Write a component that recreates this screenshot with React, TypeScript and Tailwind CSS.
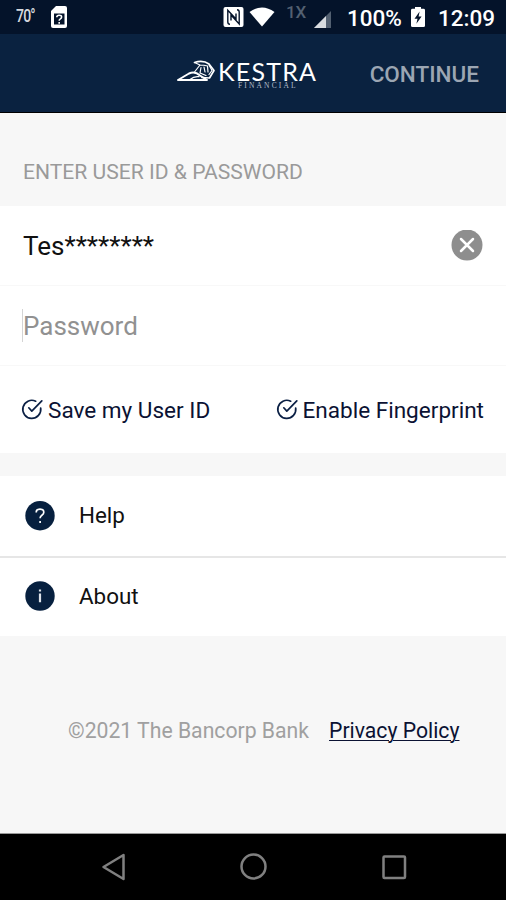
import React from 'react';

const CheckIcon = () => (
  <svg width="22" height="22" viewBox="0 0 22 22" fill="none" stroke="#0a1f44" strokeWidth="1.7" strokeLinecap="round" strokeLinejoin="round">
    <path d="M14.700 3.200A9 9 0 1 0 19.700 10" />
    <path d="M7.800 9.800l3 3.300L20.800 2.800" />
  </svg>
);

const StatusBar = () => (
  <div className="flex h-[34px] items-center bg-[#04132a] pl-4 pr-[11px] text-white">
    <span className="w-[34px] text-[17.500px] leading-none tracking-[-1px] text-[#d5d8dd]">
      <span className="inline-block origin-left scale-x-[0.8] font-medium">70°</span>
    </span>
    <svg width="18" height="24" viewBox="0 0 18 24">
      <path d="M6 1h9q2 0 2 2v18q0 2-2 2H3q-2 0-2-2V6z" fill="#fff" />
      <path d="M4 8.500h10.500v11H4z" fill="#04132a" />
      <path d="M6.800 12.200q0-2 2.400-2t2.400 1.900q0 1.100-1.200 1.800-1.200.7-1.200 1.800M9.200 17v1.700" fill="none" stroke="#fff" strokeWidth="1.6" />
    </svg>
    <svg className="ml-auto" width="21" height="22" viewBox="0 0 21 22">
      <rect x="0.5" y="1" width="20" height="20" rx="2" fill="#fff" />
      <path d="M7 18.300Q4.800 18.300 4.800 16V4.200L13 13V7.500M14 3.700Q16.200 3.700 16.200 6v12L8 9v5.500" fill="none" stroke="#04132a" strokeWidth="1.4" />
    </svg>
    <svg className="ml-[5px]" width="26" height="20" viewBox="0 0 26 20">
      <path d="M.5 5Q13-4 25.500 5L13 19.500z" fill="#fff" />
    </svg>
    <span className="mb-[10px] ml-[11px] w-[28px] text-[17px] font-medium leading-none text-[#536071]">1X</span>
    <svg className="mt-[4px]" width="17" height="17" viewBox="0 0 17 17">
      <path d="M17 0v17H0z" fill="#536071" />
      <path d="M12 5v12H0z" fill="#d9dce0" />
    </svg>
    <span className="ml-[16px] mt-[3px] w-[64px] text-[22.500px] font-medium leading-none">100%</span>
    <svg width="14" height="20" viewBox="0 0 14 22" preserveAspectRatio="none">
      <path d="M4 0h6v2h2.500Q14 2 14 3.500v17q0 1.500-1.500 1.500h-11Q0 22 0 20.500v-17Q0 2 1.500 2H4z" fill="#fff" />
      <path d="M8.600 5L3.500 12.800h3L5.400 18.500l5.200-8H7.600z" fill="#04132a" />
    </svg>
    <span className="ml-[13px] mt-[3px] text-[22.500px] font-medium leading-none">12:09</span>
  </div>
);

const Logo = () => (
  <div className="flex pl-[176px]">
    <svg width="40" height="30" viewBox="0 0 40 30" fill="none" stroke="#fff" strokeLinejoin="round" strokeLinecap="round">
      <path d="M2 23L13 16.500Q19 14 24 18.500L31 23z" strokeWidth="2" />
      <path d="M14 22.500q4-3.500 9-2.800" strokeWidth="1.200" />
      <path d="M18.500 5.500Q27 2.800 33 7L38 13.500L33.500 21L26 20.500" strokeWidth="1.700" />
      <path d="M18.500 5.500L24 8L18.500 15M24 8Q28 8 31.500 9M25 10.500l-1 5.500 6 2.500M28 10l1 5M31.500 9l.5 6M33 8l3 5.500-3 4" strokeWidth="1.200" />
    </svg>
    <div className="ml-[2px] flex w-[100px] flex-col pt-[3px] leading-none text-white">
      <span className="font-['Lato',sans-serif] text-[25px] leading-[22px] tracking-[1.200px]">KESTRA</span>
      <span className="pl-[20px] font-['Liberation_Serif',serif] text-[7.500px] leading-[7px] tracking-[2.150px] text-[#b4bdca]">FINANCIAL</span>
    </div>
  </div>
);

export default function App() {
  return (
    <div className="flex h-[900px] w-[506px] flex-col overflow-hidden bg-[#f7f7f7] font-['Roboto',sans-serif]">
      <StatusBar />

      <header className="flex h-[79px] items-center justify-between border-b border-black bg-[#0a2240] pr-[27px]">
        <Logo />
        <button className="mt-[3px] text-[22.500px] font-medium leading-none text-[#9ca6b3]">CONTINUE</button>
      </header>

      <div className="flex h-[93px] items-center pl-[23px] pt-[25px]">
        <h2 className="text-[21.100px] leading-none text-[#9a9a9a]">ENTER USER ID &amp; PASSWORD</h2>
      </div>

      <section className="h-[247px] bg-white">
        <div className="flex h-[80px] items-center justify-between border-b border-[#f8f8f8] pl-[23px] pr-[23px]">
          <span className="text-[26px] leading-none text-[#111]">Tes********</span>
          <svg width="32" height="32" viewBox="0 0 32 32">
            <circle cx="16" cy="15" r="15.500" fill="#8e8e8e" />
            <path d="M10 9l12 12M22 9l-12 12" stroke="#fff" strokeWidth="2.500" strokeLinecap="round" />
          </svg>
        </div>
        <div className="flex h-[80px] items-center border-b border-[#f8f8f8] pl-[22px]">
          <span className="h-[33px] w-px bg-[#d4d4d4]" />
          <span className="text-[26px] leading-none text-[#919191]">Password</span>
        </div>
        <div className="flex h-[87px] items-center justify-between pl-[21px] pr-[22px] text-[22.550px] leading-none text-[#0b1233]">
          <label className="flex items-center gap-[5px]">
            <CheckIcon />
            <span className="mt-[4px]">Save my User ID</span>
          </label>
          <label className="flex items-center gap-[5px]">
            <CheckIcon />
            <span className="mt-[4px]">Enable Fingerprint</span>
          </label>
        </div>
      </section>

      <section className="mt-[23px] bg-white text-[22.400px] leading-none text-[#111]">
        <div className="flex h-[82px] items-center border-b-2 border-[#e6e6e6] pl-[25px]">
          <svg width="30" height="30" viewBox="0 0 30 30">
            <circle cx="15" cy="14.700" r="14.700" fill="#07203f" />
            <path d="M11.200 11.500Q11.200 8.200 15 8.200t3.800 3.100q0 1.700-1.900 2.900-1.800 1.200-1.800 3M15.100 20v2" fill="none" stroke="#fff" strokeWidth="1.700" />
          </svg>
          <span className="mb-[2px] ml-6">Help</span>
        </div>
        <div className="flex h-[78px] items-center pb-[2px] pl-[25px]">
          <svg width="30" height="30" viewBox="0 0 30 30">
            <circle cx="15" cy="15" r="14.700" fill="#07203f" />
            <path d="M15 12.500v8.800M15 8.500v2" stroke="#dce1e8" strokeWidth="2.200" />
          </svg>
          <span className="ml-6">About</span>
        </div>
      </section>

      <footer className="flex flex-1 items-start pl-[68px] pt-[84px] text-[21.200px] leading-none">
        <span className="text-[#a0a0a0]">©2021 The Bancorp Bank</span>
        <a className="ml-5 text-[#0b1233] underline decoration-1 underline-offset-2">Privacy Policy</a>
      </footer>

      <nav className="flex h-[67px] items-center border-t border-[#999] bg-black">
        <svg className="ml-[101px]" width="26" height="28" viewBox="0 0 26 28">
          <path d="M22.500 2v24L2.500 14z" fill="none" stroke="#808080" strokeWidth="2.500" strokeLinejoin="round" />
        </svg>
        <svg className="ml-[113px]" width="28" height="28" viewBox="0 0 28 28">
          <circle cx="13.500" cy="13.500" r="12" fill="none" stroke="#808080" strokeWidth="2.500" />
        </svg>
        <svg className="ml-[113px]" width="26" height="26" viewBox="0 0 26 26">
          <rect x="2.500" y="2.500" width="21.500" height="21.500" rx="1" fill="none" stroke="#808080" strokeWidth="2.500" />
        </svg>
      </nav>
    </div>
  );
}
